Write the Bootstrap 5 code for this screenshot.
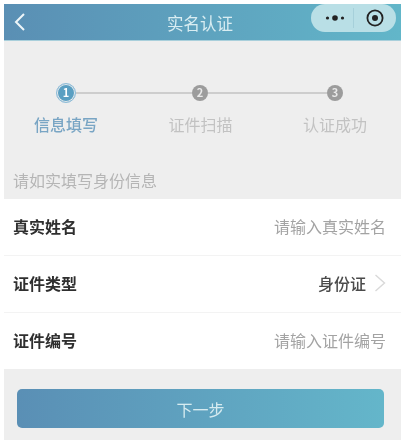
<!DOCTYPE html>
<html lang="zh-CN">
<head>
<meta charset="utf-8">
<title>实名认证</title>
<link href="https://cdn.jsdelivr.net/npm/bootstrap@5.3.0/dist/css/bootstrap.min.css" rel="stylesheet">
<style>
html,body{height:100%;background:#fff;overflow:hidden}
body{font-family:"Noto Sans CJK SC","Liberation Sans",sans-serif;font-size:16px;line-height:1.2}
.shot{margin:4px 4px 0;width:397px;height:436px;background:#eeeeee;filter:blur(.75px)}
.topbar{height:37px;background:linear-gradient(90deg,#5a8fb4,#62b6c9);color:#d9edf2;border-bottom:1px solid #a9cfdb;padding:0 5px 0 9px}
.topbar .ttl{position:absolute;left:0;right:5px;top:9px;text-align:center;font-size:16.5px;line-height:20px}
.capsule{width:85px;height:28px;border-radius:14px;background:#b9dfe6;margin-left:auto;margin-bottom:9px;padding-left:14px;padding-bottom:1px}
.capsule svg{display:block}
.capsule .tgt{margin-left:12px}
.steps-line{padding:42px 57px 0 52px;height:61px}
.dotx{border-radius:50%;color:#e9e9e9;font-size:11px;font-weight:700;line-height:1;flex:none}
.dot-on{width:20px;height:20px;background:#5a9fc2;border:1.5px solid #eef;outline:1.5px solid #8dbcd4;outline-offset:-1.5px;color:#fff;box-shadow:inset 0 0 0 1px #eee}
.dot-off{width:16px;height:16px;background:#9c9c9c}
.seg{height:2px;background:#cdcdcd;flex:none}
.seg-a{width:116px}.seg-b{width:119px}
.step-names{padding:13px 34px 0 30px;color:#c2c2c2}
.step-names span{width:64px;text-align:center;white-space:nowrap}
.step-names .on{color:#79a5c4;font-weight:500}
.hint{padding:37px 9px 0;height:65px;color:#b5b5b5}
.hint-inner{display:block;line-height:19px}
.frm{background:#fff}
.rowx{height:57px;padding:0 15px 2px 9px;border-bottom:1px solid #f3f3f3;color:#2f2f2f}
.rowx:last-child{border-bottom:0;height:56px}
.rowx b{font-weight:700}
.rowx .ph{color:#a3a3a3}
.rowx .val{color:#4a4a4a;font-weight:500}
.wrapbtn{padding:20px 17px 0 13px}
.go{display:block;width:100%;height:39px;border:0;border-radius:5px;padding:0;font-size:16px;color:#d6ebf0;background:linear-gradient(90deg,#5a8fb5,#64b6ca)}
</style>
</head>
<body>
<div class="shot">
  <div class="topbar position-relative d-flex align-items-start">
    <svg class="mt-2" width="13" height="20" viewBox="0 0 13 20" fill="none" stroke="#eef6f8" stroke-width="2"><path d="M11 2 3 10l8 8"/></svg>
    <div class="ttl">实名认证</div>
    <div class="capsule position-relative d-flex align-items-center">
      <svg width="20" height="8" viewBox="0 0 20 8" fill="#222"><circle cx="2.5" cy="4" r="1.6"/><circle cx="10" cy="4" r="2.8"/><circle cx="17.5" cy="4" r="1.6"/></svg>
      <svg class="ms-2" width="1" height="20" viewBox="0 0 1 20"><rect width="1" height="20" fill="#a6d0da"/></svg>
      <svg class="tgt" width="18" height="18" viewBox="0 0 18 18" fill="none"><circle cx="9" cy="9" r="7.6" stroke="#222" stroke-width="1.8"/><circle cx="9" cy="9" r="3" fill="#222"/></svg>
    </div>
  </div>

  <div class="steps-line d-flex align-items-center">
    <div class="dotx dot-on d-flex align-items-center justify-content-center">1</div>
    <div class="seg seg-a"></div>
    <div class="dotx dot-off d-flex align-items-center justify-content-center">2</div>
    <div class="seg seg-b"></div>
    <div class="dotx dot-off d-flex align-items-center justify-content-center">3</div>
  </div>
  <div class="step-names d-flex justify-content-between">
    <span class="on">信息填写</span><span>证件扫描</span><span>认证成功</span>
  </div>

  <div class="hint"><span class="hint-inner">请如实填写身份信息</span></div>

  <div class="frm">
    <div class="rowx d-flex align-items-center justify-content-between"><b>真实姓名</b><span class="ph">请输入真实姓名</span></div>
    <div class="rowx d-flex align-items-center justify-content-between"><b>证件类型</b>
      <span class="d-flex align-items-center gap-2"><span class="val">身份证</span>
      <svg width="12" height="20" viewBox="0 0 12 20" fill="none" stroke="#d9d9d9" stroke-width="1.4"><path d="M1.5 2 10.5 10l-9 8"/></svg></span></div>
    <div class="rowx d-flex align-items-center justify-content-between"><b>证件编号</b><span class="ph">请输入证件编号</span></div>
  </div>

  <div class="wrapbtn"><button type="button" class="btn go">下一步</button></div>
</div>
<script src="https://cdn.jsdelivr.net/npm/bootstrap@5.3.0/dist/js/bootstrap.bundle.min.js"></script>
</body>
</html>
